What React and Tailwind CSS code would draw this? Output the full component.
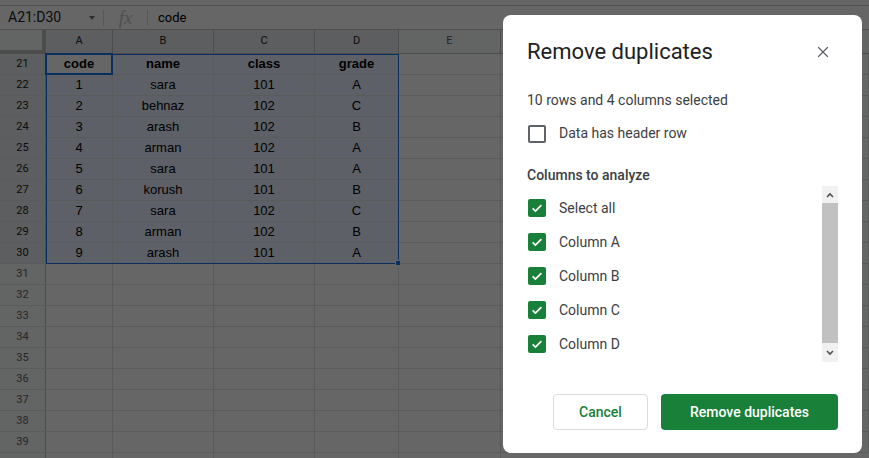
import { X } from "lucide-react"

const COLS = [
  { key: "A", w: "w-[67px]" },
  { key: "B", w: "w-[101px]" },
  { key: "C", w: "w-[101px]" },
  { key: "D", w: "w-[84px]" },
  { key: "E", w: "w-[102px]" },
]

const DATA = [
  ["code", "name", "class", "grade"],
  ["1", "sara", "101", "A"],
  ["2", "behnaz", "102", "C"],
  ["3", "arash", "102", "B"],
  ["4", "arman", "102", "A"],
  ["5", "sara", "101", "A"],
  ["6", "korush", "101", "B"],
  ["7", "sara", "102", "C"],
  ["8", "arman", "102", "B"],
  ["9", "arash", "101", "A"],
]

const ROWS = Array.from({ length: 19 }, (_, i) => 21 + i)

function Checkbox({ checked }) {
  if (!checked) {
    return <div className="w-[18px] h-[18px] rounded-[2px] border-2 border-[#5f6368] shrink-0" />
  }
  return (
    <div className="w-[18px] h-[18px] rounded-[2px] bg-[#188038] flex items-center justify-center shrink-0">
      <svg width="14" height="14" viewBox="0 0 24 24">
        <path d="M4.5 12.5l4.8 4.8L19.5 7" fill="none" stroke="white" strokeWidth="3" />
      </svg>
    </div>
  )
}

function Sheet() {
  return (
    <div className="font-['Liberation_Sans',Arial,sans-serif] text-[13px] text-black">
      {/* top strip + formula bar */}
      <div className="h-[6px] bg-white border-b border-[#c7c7c7]" />
      <div className="h-[24px] bg-white border-b border-[#c7c7c7] flex items-center">
        <div className="w-[103px] flex items-center justify-between pl-2 pr-[8px] font-['Roboto',sans-serif] text-[14px] text-[#202124]">
          <span>A21:D30</span>
          <span className="w-0 h-0 border-l-[3px] border-r-[3px] border-t-[4px] border-l-transparent border-r-transparent border-t-[#777]" />
        </div>
        <div className="w-px h-[16px] bg-[#dadce0]" />
        <div className="w-[43px] text-center font-['Liberation_Serif',serif] italic text-[19px] text-[#c5c7ca] leading-none">fx</div>
        <div className="w-px h-[16px] bg-[#dadce0]" />
        <span className="ml-[10px] text-[13px] font-['Roboto',sans-serif]">code</span>
      </div>

      <div className="relative">
        {/* column header */}
        <div className="flex h-[24px] border-b border-[#c0c0c0] bg-[#f8f9fa] font-['Roboto',sans-serif] text-[11px] text-[#5f6368]">
          <div className="w-[46px] h-full border-r-[4px] border-r-[#bdbdbd] border-b-[3px] border-b-[#bdbdbd] bg-[#f8f9fa] shrink-0" />
          {COLS.map((c, i) => (
            <div
              key={c.key}
              className={`${c.w} shrink-0 h-full border-r border-[#c0c0c0] flex items-center justify-center ${i < 4 ? "bg-[#e8eaed] text-[#202124]" : ""}`}
            >
              {c.key}
            </div>
          ))}
          <div className="flex-1" />
        </div>

        {ROWS.map((r, ri) => {
          const row = DATA[ri]
          const selected = ri < 10
          return (
            <div key={r} className="flex h-[21px] border-b border-[#e2e3e3] bg-white">
              <div
                className={`w-[46px] shrink-0 h-full border-r border-[#c0c0c0] flex items-center justify-center font-['Roboto',sans-serif] text-[11px] ${selected ? "bg-[#e8eaed] text-[#202124]" : "bg-[#f8f9fa] text-[#5f6368]"}`}
              >
                {r}
              </div>
              {COLS.map((c, ci) => (
                <div
                  key={c.key}
                  className={`${c.w} shrink-0 h-full border-r border-[#e2e3e3] flex items-center justify-center ${selected && ci < 4 && !(ri === 0 && ci === 0) ? "bg-[#e8f0fe]" : ""} ${ri === 0 ? "font-bold" : ""}`}
                >
                  {row && ci < 4 ? row[ci] : ""}
                </div>
              ))}
              <div className="flex-1 border-r border-[#e2e3e3]" />
            </div>
          )
        })}
        {/* partial next row */}
        <div className="flex h-[10px]">
          <div className="w-[46px] shrink-0 h-full border-r border-[#c0c0c0] bg-[#f8f9fa]" />
          {COLS.map((c) => (
            <div key={c.key} className={`${c.w} shrink-0 h-full border-r border-[#e2e3e3]`} />
          ))}
        </div>

        {/* selection range */}
        <div className="absolute left-[46px] top-[24px] w-[353px] h-[210px] border border-[#1a73e8] pointer-events-none" />
        <div className="absolute left-[45px] top-[23px] w-[68px] h-[22px] border-2 border-[#1a73e8] pointer-events-none" />
        <div className="absolute left-[395px] top-[230px] w-[6px] h-[6px] bg-[#1a73e8] border border-white" />
      </div>
    </div>
  )
}

function Dialog() {
  const items = ["Select all", "Column A", "Column B", "Column C", "Column D"]
  return (
    <div className="absolute z-20 left-[503px] top-[15px] w-[359px] h-[438px] bg-white rounded-lg font-['Roboto',sans-serif] text-[#3c4043] flex flex-col">
      <div className="flex items-center justify-between pl-6 pr-[30px] pt-[23px]">
        <h1 className="text-[22px] leading-[28px] text-[#202124]">Remove duplicates</h1>
        <X className="w-[18px] h-[18px] text-[#5f6368]" strokeWidth={1.6} />
      </div>

      <div className="px-6 mt-[24px] text-[14px] leading-[20px]">10 rows and 4 columns selected</div>

      <div className="px-6 mt-[13px] flex items-center gap-[13px] text-[14px]">
        <div className="ml-px"><Checkbox checked={false} /></div>
        <span>Data has header row</span>
      </div>

      <div className="px-6 mt-[21px] text-[14px] font-medium leading-[20px]">Columns to analyze</div>

      <div className="ml-6 mr-6 mt-[1px] h-[176px] flex">
        <div className="flex-1 pt-[5px]">
          {items.map((label) => (
            <div key={label} className="h-[34px] flex items-center gap-[13px] text-[14px]">
              <div className="ml-px"><Checkbox checked /></div>
              <span>{label}</span>
            </div>
          ))}
        </div>
        <div className="w-[16px] bg-[#f1f1f1] flex flex-col items-center">
          <div className="h-[17px] flex items-center justify-center">
            <svg width="8" height="6" viewBox="0 0 8 6"><path d="M1 5l3-3 3 3" fill="none" stroke="#505050" strokeWidth="1.6" /></svg>
          </div>
          <div className="w-full h-[140px] bg-[#c1c1c1]" />
          <div className="flex-1 flex items-center justify-center">
            <svg width="8" height="6" viewBox="0 0 8 6"><path d="M1 1l3 3 3-3" fill="none" stroke="#505050" strokeWidth="1.6" /></svg>
          </div>
        </div>
      </div>

      <div className="mt-auto mb-[23px] px-6 flex justify-end gap-[13px]">
        <button className="w-[95px] h-[36px] rounded border border-[#dadce0] text-[#188038] text-[14px] font-medium">Cancel</button>
        <button className="w-[177px] h-[36px] rounded bg-[#188038] text-white text-[14px] font-medium">Remove duplicates</button>
      </div>
    </div>
  )
}

export default function App() {
  return (
    <div className="relative w-[869px] h-[458px] overflow-hidden bg-white">
      <Sheet />
      <div className="absolute inset-0 z-10 bg-black/60" />
      <Dialog />
    </div>
  )
}
